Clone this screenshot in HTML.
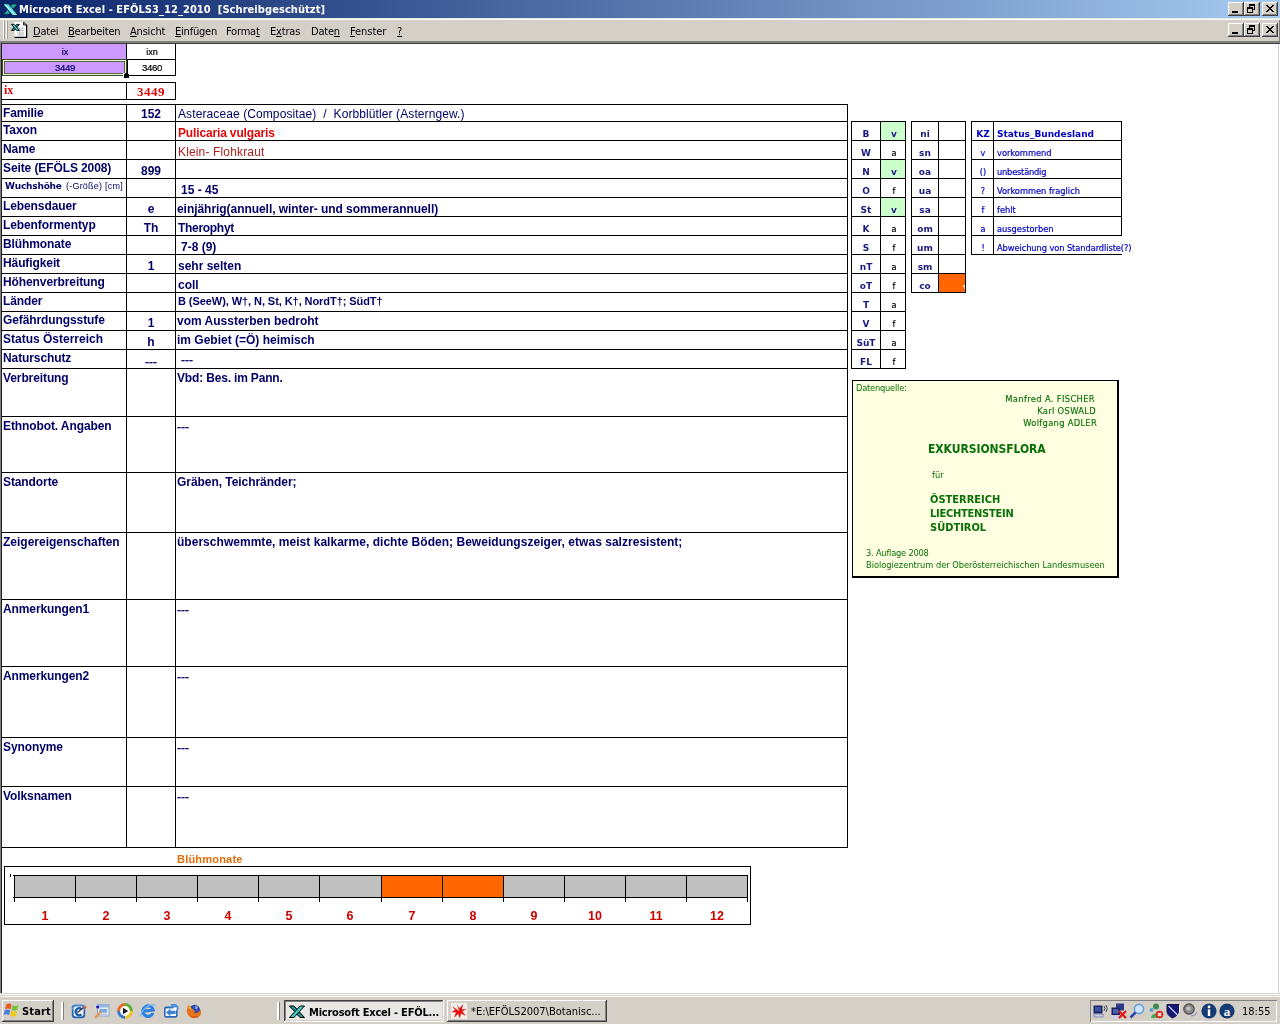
<!DOCTYPE html>
<html lang="de"><head><meta charset="utf-8"><title>Microsoft Excel - EFÖLS3_12_2010</title>
<style>
html,body{margin:0;padding:0;width:1280px;height:1024px;overflow:hidden;background:#d4d0c8}
#root{position:relative;width:1280px;height:1024px;overflow:hidden}
.a,.r,.t{position:absolute}
.r{box-sizing:border-box}
.t{white-space:nowrap;will-change:transform}
u{text-decoration:underline}
svg{position:absolute;overflow:visible}
</style></head><body><div id="root">
<div class="a" style="left:0;top:0;width:1280px;height:18px;background:linear-gradient(90deg,#0a246a 0%,#a6caf0 100%)"></div>
<div class="t" style="top:2.69px;font:bold 11px/13px 'DejaVu Sans Condensed','DejaVu Sans',sans-serif;color:#fff;left:19px;letter-spacing:0.07px;white-space:pre;">Microsoft Excel - EFÖLS3_12_2010  [Schreibgeschützt]</div>
<div class="a" style="left:0px;top:18px;width:1280px;height:23px;background:#d4d0c8"></div>
<div class="a" style="left:0px;top:18px;width:1280px;height:1px;background:#e9e7e2"></div>
<div class="a" style="left:0px;top:19px;width:1280px;height:1px;background:#fff"></div>
<div class="a" style="left:0px;top:41px;width:1280px;height:1px;background:#808080"></div>
<div class="a" style="left:0px;top:42px;width:1280px;height:1px;background:#808080"></div>
<div class="a" style="left:0px;top:43px;width:1280px;height:1px;background:#404040"></div>
<div class="a" style="left:3px;top:21px;width:1px;height:18px;background:#fff"></div>
<div class="a" style="left:4px;top:21px;width:1px;height:18px;background:#a09c94"></div>
<div class="a" style="left:6px;top:21px;width:1px;height:18px;background:#fff"></div>
<div class="a" style="left:7px;top:21px;width:1px;height:18px;background:#a09c94"></div>
<div class="t" style="left:32.5px;top:25px;font:11px/13px 'DejaVu Sans Condensed','DejaVu Sans',sans-serif;color:#000;letter-spacing:-0.2px"><u>D</u>atei</div>
<div class="t" style="left:67.5px;top:25px;font:11px/13px 'DejaVu Sans Condensed','DejaVu Sans',sans-serif;color:#000;letter-spacing:-0.2px"><u>B</u>earbeiten</div>
<div class="t" style="left:129.5px;top:25px;font:11px/13px 'DejaVu Sans Condensed','DejaVu Sans',sans-serif;color:#000;letter-spacing:-0.2px"><u>A</u>nsicht</div>
<div class="t" style="left:174.5px;top:25px;font:11px/13px 'DejaVu Sans Condensed','DejaVu Sans',sans-serif;color:#000;letter-spacing:-0.2px"><u>E</u>infügen</div>
<div class="t" style="left:226px;top:25px;font:11px/13px 'DejaVu Sans Condensed','DejaVu Sans',sans-serif;color:#000;letter-spacing:-0.2px">Forma<u>t</u></div>
<div class="t" style="left:270px;top:25px;font:11px/13px 'DejaVu Sans Condensed','DejaVu Sans',sans-serif;color:#000;letter-spacing:-0.2px">E<u>x</u>tras</div>
<div class="t" style="left:311px;top:25px;font:11px/13px 'DejaVu Sans Condensed','DejaVu Sans',sans-serif;color:#000;letter-spacing:-0.2px">Date<u>n</u></div>
<div class="t" style="left:350px;top:25px;font:11px/13px 'DejaVu Sans Condensed','DejaVu Sans',sans-serif;color:#000;letter-spacing:-0.05px"><u>F</u>enster</div>
<div class="t" style="left:397px;top:25px;font:11px/13px 'DejaVu Sans Condensed','DejaVu Sans',sans-serif;color:#000;letter-spacing:-0.2px"><u>?</u></div>
<div class="a" style="left:0px;top:44px;width:1280px;height:949px;background:#fff"></div>
<div class="a" style="left:0px;top:42px;width:1px;height:952px;background:#808080"></div>
<div class="a" style="left:1px;top:43px;width:1px;height:951px;background:#202020"></div>
<div class="a" style="left:1278px;top:44px;width:1px;height:950px;background:#d4d0c8"></div>
<div class="a" style="left:1279px;top:44px;width:1px;height:950px;background:#fff"></div>
<div class="a" style="left:0px;top:993px;width:1280px;height:1px;background:#d4d0c8"></div>
<div class="a" style="left:0px;top:994px;width:1280px;height:1px;background:#fff"></div>
<div class="a" style="left:2px;top:44px;width:124px;height:15px;background:#cc99ff"></div>
<div class="a" style="left:2px;top:60px;width:124px;height:15px;background:#cc99ff"></div>
<div class="a" style="left:2px;top:59px;width:174px;height:1px;background:#000"></div>
<div class="a" style="left:2px;top:75px;width:174px;height:1px;background:#000"></div>
<div class="a" style="left:126px;top:44px;width:1px;height:32px;background:#000"></div>
<div class="a" style="left:175px;top:44px;width:1px;height:32px;background:#000"></div>
<div class="a" style="left:2px;top:59px;width:125px;height:17px;border:1px solid #3a4a2a;box-sizing:border-box"></div>
<div class="a" style="left:3px;top:60px;width:123px;height:15px;border:1px solid #e6f5d0;box-sizing:border-box"></div>
<div class="a" style="left:4px;top:61px;width:121px;height:13px;border:1px solid #55663f;box-sizing:border-box"></div>
<div class="a" style="left:127px;top:60px;width:1px;height:13px;background:#000"></div>
<div class="a" style="left:123px;top:73px;width:6px;height:5px;background:#fff"></div>
<div class="a" style="left:124px;top:74px;width:5px;height:4px;background:#000"></div>
<div class="a" style="left:125px;top:73px;width:3px;height:1px;background:#000"></div>
<div class="t" style="top:47.38px;font:9px/11px 'Liberation Sans',sans-serif;color:#000066;left:-135.5px;width:400px;text-align:center;-webkit-text-stroke:0.2px #000066;">ix</div>
<div class="t" style="top:47.38px;font:9px/11px 'Liberation Sans',sans-serif;color:#000;left:-48.5px;width:400px;text-align:center;-webkit-text-stroke:0.2px #000;">ixn</div>
<div class="t" style="top:61.87px;font:9.6px/11.6px 'Liberation Sans',sans-serif;color:#000066;left:-135.5px;width:400px;text-align:center;letter-spacing:-0.3px;-webkit-text-stroke:0.2px #000066;">3449</div>
<div class="t" style="top:61.87px;font:9.6px/11.6px 'Liberation Sans',sans-serif;color:#000;left:-48.5px;width:400px;text-align:center;letter-spacing:-0.3px;-webkit-text-stroke:0.2px #000;">3460</div>
<div class="a" style="left:2px;top:82px;width:174px;height:1px;background:#000"></div>
<div class="a" style="left:2px;top:99px;width:174px;height:1px;background:#000"></div>
<div class="a" style="left:126px;top:82px;width:1px;height:18px;background:#000"></div>
<div class="a" style="left:175px;top:82px;width:1px;height:18px;background:#000"></div>
<div class="t" style="top:82.95px;font:bold 12px/14px 'Liberation Serif',serif;color:#dd0806;left:3.6px;">ix</div>
<div class="t" style="top:84.11px;font:bold 13px/15px 'Liberation Serif',serif;color:#dd0806;left:-49px;width:400px;text-align:center;letter-spacing:0.5px;">3449</div>
<div class="a" style="left:2px;top:104px;width:846px;height:1px;background:#000"></div>
<div class="a" style="left:2px;top:121px;width:846px;height:1px;background:#000"></div>
<div class="a" style="left:2px;top:140px;width:846px;height:1px;background:#000"></div>
<div class="a" style="left:2px;top:159px;width:846px;height:1px;background:#000"></div>
<div class="a" style="left:2px;top:178px;width:846px;height:1px;background:#000"></div>
<div class="a" style="left:2px;top:197px;width:846px;height:1px;background:#000"></div>
<div class="a" style="left:2px;top:216px;width:846px;height:1px;background:#000"></div>
<div class="a" style="left:2px;top:235px;width:846px;height:1px;background:#000"></div>
<div class="a" style="left:2px;top:254px;width:846px;height:1px;background:#000"></div>
<div class="a" style="left:2px;top:273px;width:846px;height:1px;background:#000"></div>
<div class="a" style="left:2px;top:292px;width:846px;height:1px;background:#000"></div>
<div class="a" style="left:2px;top:311px;width:846px;height:1px;background:#000"></div>
<div class="a" style="left:2px;top:330px;width:846px;height:1px;background:#000"></div>
<div class="a" style="left:2px;top:349px;width:846px;height:1px;background:#000"></div>
<div class="a" style="left:2px;top:368px;width:846px;height:1px;background:#000"></div>
<div class="a" style="left:2px;top:416px;width:846px;height:1px;background:#000"></div>
<div class="a" style="left:2px;top:472px;width:846px;height:1px;background:#000"></div>
<div class="a" style="left:2px;top:532px;width:846px;height:1px;background:#000"></div>
<div class="a" style="left:2px;top:599px;width:846px;height:1px;background:#000"></div>
<div class="a" style="left:2px;top:666px;width:846px;height:1px;background:#000"></div>
<div class="a" style="left:2px;top:737px;width:846px;height:1px;background:#000"></div>
<div class="a" style="left:2px;top:786px;width:846px;height:1px;background:#000"></div>
<div class="a" style="left:2px;top:847px;width:846px;height:1px;background:#000"></div>
<div class="a" style="left:126px;top:104px;width:1px;height:744px;background:#000"></div>
<div class="a" style="left:175px;top:104px;width:1px;height:744px;background:#000"></div>
<div class="a" style="left:847px;top:104px;width:1px;height:744px;background:#000"></div>
<div class="t" style="top:105.84px;font:bold 12px/14px 'Liberation Sans',sans-serif;color:#000066;left:3.3px;letter-spacing:-0.1px;">Familie</div>
<div class="t" style="top:122.84px;font:bold 12px/14px 'Liberation Sans',sans-serif;color:#000066;left:3.3px;letter-spacing:-0.1px;">Taxon</div>
<div class="t" style="top:141.84px;font:bold 12px/14px 'Liberation Sans',sans-serif;color:#000066;left:3.3px;letter-spacing:-0.1px;">Name</div>
<div class="t" style="top:160.84px;font:bold 12px/14px 'Liberation Sans',sans-serif;color:#000066;left:3.3px;letter-spacing:-0.1px;">Seite (EFÖLS 2008)</div>
<div class="t" style="top:198.84px;font:bold 12px/14px 'Liberation Sans',sans-serif;color:#000066;left:3.3px;letter-spacing:-0.1px;">Lebensdauer</div>
<div class="t" style="top:217.84px;font:bold 12px/14px 'Liberation Sans',sans-serif;color:#000066;left:3.3px;letter-spacing:-0.1px;">Lebenformentyp</div>
<div class="t" style="top:236.84px;font:bold 12px/14px 'Liberation Sans',sans-serif;color:#000066;left:3.3px;letter-spacing:-0.1px;">Blühmonate</div>
<div class="t" style="top:255.84px;font:bold 12px/14px 'Liberation Sans',sans-serif;color:#000066;left:3.3px;letter-spacing:-0.1px;">Häufigkeit</div>
<div class="t" style="top:274.84px;font:bold 12px/14px 'Liberation Sans',sans-serif;color:#000066;left:3.3px;letter-spacing:-0.1px;">Höhenverbreitung</div>
<div class="t" style="top:293.84px;font:bold 12px/14px 'Liberation Sans',sans-serif;color:#000066;left:3.3px;letter-spacing:-0.1px;">Länder</div>
<div class="t" style="top:312.84px;font:bold 12px/14px 'Liberation Sans',sans-serif;color:#000066;left:3.3px;letter-spacing:-0.1px;">Gefährdungsstufe</div>
<div class="t" style="top:331.84px;font:bold 12px/14px 'Liberation Sans',sans-serif;color:#000066;left:3.3px;letter-spacing:0px;">Status Österreich</div>
<div class="t" style="top:350.84px;font:bold 12px/14px 'Liberation Sans',sans-serif;color:#000066;left:3.3px;letter-spacing:-0.1px;">Naturschutz</div>
<div class="t" style="top:370.84px;font:bold 12px/14px 'Liberation Sans',sans-serif;color:#000066;left:3.3px;letter-spacing:-0.1px;">Verbreitung</div>
<div class="t" style="top:418.84px;font:bold 12px/14px 'Liberation Sans',sans-serif;color:#000066;left:3.3px;letter-spacing:-0.1px;">Ethnobot. Angaben</div>
<div class="t" style="top:474.84px;font:bold 12px/14px 'Liberation Sans',sans-serif;color:#000066;left:3.3px;letter-spacing:-0.1px;">Standorte</div>
<div class="t" style="top:534.84px;font:bold 12px/14px 'Liberation Sans',sans-serif;color:#000066;left:3.3px;letter-spacing:0px;">Zeigereigenschaften</div>
<div class="t" style="top:601.84px;font:bold 12px/14px 'Liberation Sans',sans-serif;color:#000066;left:3.3px;letter-spacing:-0.1px;">Anmerkungen1</div>
<div class="t" style="top:668.84px;font:bold 12px/14px 'Liberation Sans',sans-serif;color:#000066;left:3.3px;letter-spacing:-0.1px;">Anmerkungen2</div>
<div class="t" style="top:739.84px;font:bold 12px/14px 'Liberation Sans',sans-serif;color:#000066;left:3.3px;letter-spacing:-0.1px;">Synonyme</div>
<div class="t" style="top:788.84px;font:bold 12px/14px 'Liberation Sans',sans-serif;color:#000066;left:3.3px;letter-spacing:-0.1px;">Volksnamen</div>
<div class="t" style="top:181.39px;font:bold 9px/11px 'DejaVu Sans',sans-serif;color:#000066;left:4.5px;letter-spacing:-0.2px;">Wuchshöhe</div>
<div class="t" style="top:181.38px;font:9px/11px 'Liberation Sans',sans-serif;color:#000066;left:65.5px;letter-spacing:0.22px;">(-Größe) [cm]</div>
<div class="t" style="top:106.84px;font:bold 12px/14px 'Liberation Sans',sans-serif;color:#000066;left:-49px;width:400px;text-align:center;">152</div>
<div class="t" style="top:163.84px;font:bold 12px/14px 'Liberation Sans',sans-serif;color:#000066;left:-49px;width:400px;text-align:center;">899</div>
<div class="t" style="top:201.84px;font:bold 12px/14px 'Liberation Sans',sans-serif;color:#000066;left:-49px;width:400px;text-align:center;">e</div>
<div class="t" style="top:220.84px;font:bold 12px/14px 'Liberation Sans',sans-serif;color:#000066;left:-49px;width:400px;text-align:center;">Th</div>
<div class="t" style="top:258.84px;font:bold 12px/14px 'Liberation Sans',sans-serif;color:#000066;left:-49px;width:400px;text-align:center;">1</div>
<div class="t" style="top:315.84px;font:bold 12px/14px 'Liberation Sans',sans-serif;color:#000066;left:-49px;width:400px;text-align:center;">1</div>
<div class="t" style="top:334.84px;font:bold 12px/14px 'Liberation Sans',sans-serif;color:#000066;left:-49px;width:400px;text-align:center;">h</div>
<div class="t" style="top:354.84px;font:12px/14px 'Liberation Sans',sans-serif;color:#000066;left:-49px;width:400px;text-align:center;-webkit-text-stroke:0.3px #000066;">---</div>
<div class="t" style="top:106.84px;font:12px/14px 'Liberation Sans',sans-serif;color:#000066;left:178px;letter-spacing:0.1px;white-space:pre;">Asteraceae (Compositae)  /  Korbblütler (Asterngew.)</div>
<div class="t" style="top:125.84px;font:bold 12px/14px 'Liberation Sans',sans-serif;color:#dd0806;left:177.5px;letter-spacing:-0.15px;white-space:pre;">Pulicaria vulgaris</div>
<div class="t" style="top:144.84px;font:12px/14px 'Liberation Sans',sans-serif;color:#b02020;left:178px;letter-spacing:0.15px;white-space:pre;">Klein- Flohkraut</div>
<div class="t" style="top:182.84px;font:bold 12px/14px 'Liberation Sans',sans-serif;color:#000066;left:181px;white-space:pre;">15 - 45</div>
<div class="t" style="top:201.84px;font:bold 12px/14px 'Liberation Sans',sans-serif;color:#000066;left:177px;letter-spacing:-0.05px;white-space:pre;">einjährig(annuell, winter- und sommerannuell)</div>
<div class="t" style="top:220.84px;font:bold 12px/14px 'Liberation Sans',sans-serif;color:#000066;left:177.5px;letter-spacing:-0.3px;white-space:pre;">Therophyt</div>
<div class="t" style="top:239.84px;font:bold 12px/14px 'Liberation Sans',sans-serif;color:#000066;left:181px;white-space:pre;">7-8 (9)</div>
<div class="t" style="top:258.84px;font:bold 12px/14px 'Liberation Sans',sans-serif;color:#000066;left:177.5px;white-space:pre;">sehr selten</div>
<div class="t" style="top:277.84px;font:bold 12px/14px 'Liberation Sans',sans-serif;color:#000066;left:177.5px;white-space:pre;">coll</div>
<div class="t" style="top:294.69px;font:bold 11px/13px 'Liberation Sans',sans-serif;color:#000066;left:177.5px;letter-spacing:-0.07px;white-space:pre;">B (SeeW), W†, N, St, K†, NordT†; SüdT†</div>
<div class="t" style="top:313.84px;font:bold 12px/14px 'Liberation Sans',sans-serif;color:#000066;left:177px;white-space:pre;">vom Aussterben bedroht</div>
<div class="t" style="top:332.84px;font:bold 12px/14px 'Liberation Sans',sans-serif;color:#000066;left:177px;white-space:pre;">im Gebiet (=Ö) heimisch</div>
<div class="t" style="top:352.84px;font:12px/14px 'Liberation Sans',sans-serif;color:#000066;left:181.3px;-webkit-text-stroke:0.3px #000066;">---</div>
<div class="t" style="top:370.84px;font:bold 12px/14px 'Liberation Sans',sans-serif;color:#000066;left:177px;letter-spacing:-0.17px;">Vbd: Bes. im Pann.</div>
<div class="t" style="top:419.84px;font:12px/14px 'Liberation Sans',sans-serif;color:#000066;left:177.3px;-webkit-text-stroke:0.3px #000066;">---</div>
<div class="t" style="top:474.84px;font:bold 12px/14px 'Liberation Sans',sans-serif;color:#000066;left:177px;letter-spacing:-0.05px;">Gräben, Teichränder;</div>
<div class="t" style="top:534.84px;font:bold 12px/14px 'Liberation Sans',sans-serif;color:#000066;left:177px;letter-spacing:0.03px;">überschwemmte, meist kalkarme, dichte Böden; Beweidungszeiger, etwas salzresistent;</div>
<div class="t" style="top:602.84px;font:12px/14px 'Liberation Sans',sans-serif;color:#000066;left:177.3px;-webkit-text-stroke:0.3px #000066;">---</div>
<div class="t" style="top:669.84px;font:12px/14px 'Liberation Sans',sans-serif;color:#000066;left:177.3px;-webkit-text-stroke:0.3px #000066;">---</div>
<div class="t" style="top:740.84px;font:12px/14px 'Liberation Sans',sans-serif;color:#000066;left:177.3px;-webkit-text-stroke:0.3px #000066;">---</div>
<div class="t" style="top:789.84px;font:12px/14px 'Liberation Sans',sans-serif;color:#000066;left:177.3px;-webkit-text-stroke:0.3px #000066;">---</div>
<div class="a" style="left:881px;top:122px;width:24px;height:18px;background:#ccffcc"></div>
<div class="a" style="left:881px;top:160px;width:24px;height:18px;background:#ccffcc"></div>
<div class="a" style="left:881px;top:198px;width:24px;height:18px;background:#ccffcc"></div>
<div class="a" style="left:851px;top:121px;width:55px;height:1px;background:#000"></div>
<div class="a" style="left:851px;top:140px;width:55px;height:1px;background:#000"></div>
<div class="a" style="left:851px;top:159px;width:55px;height:1px;background:#000"></div>
<div class="a" style="left:851px;top:178px;width:55px;height:1px;background:#000"></div>
<div class="a" style="left:851px;top:197px;width:55px;height:1px;background:#000"></div>
<div class="a" style="left:851px;top:216px;width:55px;height:1px;background:#000"></div>
<div class="a" style="left:851px;top:235px;width:55px;height:1px;background:#000"></div>
<div class="a" style="left:851px;top:254px;width:55px;height:1px;background:#000"></div>
<div class="a" style="left:851px;top:273px;width:55px;height:1px;background:#000"></div>
<div class="a" style="left:851px;top:292px;width:55px;height:1px;background:#000"></div>
<div class="a" style="left:851px;top:311px;width:55px;height:1px;background:#000"></div>
<div class="a" style="left:851px;top:330px;width:55px;height:1px;background:#000"></div>
<div class="a" style="left:851px;top:349px;width:55px;height:1px;background:#000"></div>
<div class="a" style="left:851px;top:368px;width:55px;height:1px;background:#000"></div>
<div class="a" style="left:851px;top:121px;width:1px;height:248px;background:#000"></div>
<div class="a" style="left:880px;top:121px;width:1px;height:248px;background:#000"></div>
<div class="a" style="left:905px;top:121px;width:1px;height:248px;background:#000"></div>
<div class="t" style="top:129.39px;font:bold 9px/11px 'DejaVu Sans',sans-serif;color:#1a1a80;left:666px;width:400px;text-align:center;">B</div>
<div class="t" style="top:129.39px;font:bold 9px/11px 'DejaVu Sans',sans-serif;color:#1a1a80;left:693.5px;width:400px;text-align:center;">v</div>
<div class="t" style="top:148.39px;font:bold 9px/11px 'DejaVu Sans',sans-serif;color:#1a1a80;left:666px;width:400px;text-align:center;">W</div>
<div class="t" style="top:148.39px;font:9px/11px 'DejaVu Sans Condensed','DejaVu Sans',sans-serif;color:#000;left:693.5px;width:400px;text-align:center;-webkit-text-stroke:0.2px #000;">a</div>
<div class="t" style="top:167.39px;font:bold 9px/11px 'DejaVu Sans',sans-serif;color:#1a1a80;left:666px;width:400px;text-align:center;">N</div>
<div class="t" style="top:167.39px;font:bold 9px/11px 'DejaVu Sans',sans-serif;color:#1a1a80;left:693.5px;width:400px;text-align:center;">v</div>
<div class="t" style="top:186.39px;font:bold 9px/11px 'DejaVu Sans',sans-serif;color:#1a1a80;left:666px;width:400px;text-align:center;">O</div>
<div class="t" style="top:186.39px;font:9px/11px 'DejaVu Sans Condensed','DejaVu Sans',sans-serif;color:#000;left:693.5px;width:400px;text-align:center;-webkit-text-stroke:0.2px #000;">f</div>
<div class="t" style="top:205.39px;font:bold 9px/11px 'DejaVu Sans',sans-serif;color:#1a1a80;left:666px;width:400px;text-align:center;">St</div>
<div class="t" style="top:205.39px;font:bold 9px/11px 'DejaVu Sans',sans-serif;color:#1a1a80;left:693.5px;width:400px;text-align:center;">v</div>
<div class="t" style="top:224.39px;font:bold 9px/11px 'DejaVu Sans',sans-serif;color:#1a1a80;left:666px;width:400px;text-align:center;">K</div>
<div class="t" style="top:224.39px;font:9px/11px 'DejaVu Sans Condensed','DejaVu Sans',sans-serif;color:#000;left:693.5px;width:400px;text-align:center;-webkit-text-stroke:0.2px #000;">a</div>
<div class="t" style="top:243.39px;font:bold 9px/11px 'DejaVu Sans',sans-serif;color:#1a1a80;left:666px;width:400px;text-align:center;">S</div>
<div class="t" style="top:243.39px;font:9px/11px 'DejaVu Sans Condensed','DejaVu Sans',sans-serif;color:#000;left:693.5px;width:400px;text-align:center;-webkit-text-stroke:0.2px #000;">f</div>
<div class="t" style="top:262.39px;font:bold 9px/11px 'DejaVu Sans',sans-serif;color:#1a1a80;left:666px;width:400px;text-align:center;">nT</div>
<div class="t" style="top:262.39px;font:9px/11px 'DejaVu Sans Condensed','DejaVu Sans',sans-serif;color:#000;left:693.5px;width:400px;text-align:center;-webkit-text-stroke:0.2px #000;">a</div>
<div class="t" style="top:281.39px;font:bold 9px/11px 'DejaVu Sans',sans-serif;color:#1a1a80;left:666px;width:400px;text-align:center;">oT</div>
<div class="t" style="top:281.39px;font:9px/11px 'DejaVu Sans Condensed','DejaVu Sans',sans-serif;color:#000;left:693.5px;width:400px;text-align:center;-webkit-text-stroke:0.2px #000;">f</div>
<div class="t" style="top:300.39px;font:bold 9px/11px 'DejaVu Sans',sans-serif;color:#1a1a80;left:666px;width:400px;text-align:center;">T</div>
<div class="t" style="top:300.39px;font:9px/11px 'DejaVu Sans Condensed','DejaVu Sans',sans-serif;color:#000;left:693.5px;width:400px;text-align:center;-webkit-text-stroke:0.2px #000;">a</div>
<div class="t" style="top:319.39px;font:bold 9px/11px 'DejaVu Sans',sans-serif;color:#1a1a80;left:666px;width:400px;text-align:center;">V</div>
<div class="t" style="top:319.39px;font:9px/11px 'DejaVu Sans Condensed','DejaVu Sans',sans-serif;color:#000;left:693.5px;width:400px;text-align:center;-webkit-text-stroke:0.2px #000;">f</div>
<div class="t" style="top:338.39px;font:bold 9px/11px 'DejaVu Sans',sans-serif;color:#1a1a80;left:666px;width:400px;text-align:center;">SüT</div>
<div class="t" style="top:338.39px;font:9px/11px 'DejaVu Sans Condensed','DejaVu Sans',sans-serif;color:#000;left:693.5px;width:400px;text-align:center;-webkit-text-stroke:0.2px #000;">a</div>
<div class="t" style="top:357.39px;font:bold 9px/11px 'DejaVu Sans',sans-serif;color:#1a1a80;left:666px;width:400px;text-align:center;">FL</div>
<div class="t" style="top:357.39px;font:9px/11px 'DejaVu Sans Condensed','DejaVu Sans',sans-serif;color:#000;left:693.5px;width:400px;text-align:center;-webkit-text-stroke:0.2px #000;">f</div>
<div class="a" style="left:939px;top:274px;width:26px;height:18px;background:#ff6600"></div>
<div class="a" style="left:911px;top:121px;width:55px;height:1px;background:#000"></div>
<div class="a" style="left:911px;top:140px;width:55px;height:1px;background:#000"></div>
<div class="a" style="left:911px;top:159px;width:55px;height:1px;background:#000"></div>
<div class="a" style="left:911px;top:178px;width:55px;height:1px;background:#000"></div>
<div class="a" style="left:911px;top:197px;width:55px;height:1px;background:#000"></div>
<div class="a" style="left:911px;top:216px;width:55px;height:1px;background:#000"></div>
<div class="a" style="left:911px;top:235px;width:55px;height:1px;background:#000"></div>
<div class="a" style="left:911px;top:254px;width:55px;height:1px;background:#000"></div>
<div class="a" style="left:911px;top:273px;width:55px;height:1px;background:#000"></div>
<div class="a" style="left:911px;top:292px;width:55px;height:1px;background:#000"></div>
<div class="a" style="left:911px;top:121px;width:1px;height:172px;background:#000"></div>
<div class="a" style="left:938px;top:121px;width:1px;height:172px;background:#000"></div>
<div class="a" style="left:965px;top:121px;width:1px;height:172px;background:#000"></div>
<div class="t" style="top:129.39px;font:bold 9px/11px 'DejaVu Sans',sans-serif;color:#1a1a80;left:725px;width:400px;text-align:center;">ni</div>
<div class="t" style="top:148.39px;font:bold 9px/11px 'DejaVu Sans',sans-serif;color:#1a1a80;left:725px;width:400px;text-align:center;">sn</div>
<div class="t" style="top:167.39px;font:bold 9px/11px 'DejaVu Sans',sans-serif;color:#1a1a80;left:725px;width:400px;text-align:center;">oa</div>
<div class="t" style="top:186.39px;font:bold 9px/11px 'DejaVu Sans',sans-serif;color:#1a1a80;left:725px;width:400px;text-align:center;">ua</div>
<div class="t" style="top:205.39px;font:bold 9px/11px 'DejaVu Sans',sans-serif;color:#1a1a80;left:725px;width:400px;text-align:center;">sa</div>
<div class="t" style="top:224.39px;font:bold 9px/11px 'DejaVu Sans',sans-serif;color:#1a1a80;left:725px;width:400px;text-align:center;">om</div>
<div class="t" style="top:243.39px;font:bold 9px/11px 'DejaVu Sans',sans-serif;color:#1a1a80;left:725px;width:400px;text-align:center;">um</div>
<div class="t" style="top:262.39px;font:bold 9px/11px 'DejaVu Sans',sans-serif;color:#1a1a80;left:725px;width:400px;text-align:center;">sm</div>
<div class="t" style="top:281.39px;font:bold 9px/11px 'DejaVu Sans',sans-serif;color:#1a1a80;left:725px;width:400px;text-align:center;">co</div>
<div class="a" style="left:961px;top:285px;width:4px;height:4px;overflow:hidden"><div class="t" style="left:0.5px;top:-1.5px;font:bold 9px/11px 'DejaVu Sans',sans-serif;color:#fff">1</div></div>
<div class="a" style="left:971px;top:121px;width:151px;height:1px;background:#000"></div>
<div class="a" style="left:971px;top:140px;width:151px;height:1px;background:#000"></div>
<div class="a" style="left:971px;top:159px;width:151px;height:1px;background:#000"></div>
<div class="a" style="left:971px;top:178px;width:151px;height:1px;background:#000"></div>
<div class="a" style="left:971px;top:197px;width:151px;height:1px;background:#000"></div>
<div class="a" style="left:971px;top:216px;width:151px;height:1px;background:#000"></div>
<div class="a" style="left:971px;top:235px;width:151px;height:1px;background:#000"></div>
<div class="a" style="left:971px;top:254px;width:151px;height:1px;background:#000"></div>
<div class="a" style="left:971px;top:121px;width:1px;height:134px;background:#000"></div>
<div class="a" style="left:993px;top:121px;width:1px;height:134px;background:#000"></div>
<div class="a" style="left:1121px;top:121px;width:1px;height:115px;background:#000"></div>
<div class="t" style="top:129.39px;font:bold 9px/11px 'DejaVu Sans',sans-serif;color:#0000c4;left:782.5px;width:400px;text-align:center;">KZ</div>
<div class="t" style="top:129.39px;font:bold 9px/11px 'DejaVu Sans',sans-serif;color:#0000c4;left:997px;">Status_Bundesland</div>
<div class="t" style="top:148.39px;font:9px/11px 'DejaVu Sans Condensed','DejaVu Sans',sans-serif;color:#0000c4;left:783px;width:400px;text-align:center;-webkit-text-stroke:0.2px #0000c4;">v</div>
<div class="t" style="top:147.22px;font:9.2px/11.2px 'DejaVu Sans Condensed','DejaVu Sans',sans-serif;color:#0000c4;left:997px;-webkit-text-stroke:0.2px #0000c4;">vorkommend</div>
<div class="t" style="top:167.39px;font:9px/11px 'DejaVu Sans Condensed','DejaVu Sans',sans-serif;color:#0000c4;left:783px;width:400px;text-align:center;-webkit-text-stroke:0.2px #0000c4;">()</div>
<div class="t" style="top:166.22px;font:9.2px/11.2px 'DejaVu Sans Condensed','DejaVu Sans',sans-serif;color:#0000c4;left:997px;letter-spacing:-0.2px;-webkit-text-stroke:0.2px #0000c4;">unbeständig</div>
<div class="t" style="top:186.39px;font:9px/11px 'DejaVu Sans Condensed','DejaVu Sans',sans-serif;color:#0000c4;left:783px;width:400px;text-align:center;-webkit-text-stroke:0.2px #0000c4;">?</div>
<div class="t" style="top:185.22px;font:9.2px/11.2px 'DejaVu Sans Condensed','DejaVu Sans',sans-serif;color:#0000c4;left:997px;-webkit-text-stroke:0.2px #0000c4;">Vorkommen fraglich</div>
<div class="t" style="top:205.39px;font:9px/11px 'DejaVu Sans Condensed','DejaVu Sans',sans-serif;color:#0000c4;left:783px;width:400px;text-align:center;-webkit-text-stroke:0.2px #0000c4;">f</div>
<div class="t" style="top:204.22px;font:9.2px/11.2px 'DejaVu Sans Condensed','DejaVu Sans',sans-serif;color:#0000c4;left:997px;-webkit-text-stroke:0.2px #0000c4;">fehlt</div>
<div class="t" style="top:224.39px;font:9px/11px 'DejaVu Sans Condensed','DejaVu Sans',sans-serif;color:#0000c4;left:783px;width:400px;text-align:center;-webkit-text-stroke:0.2px #0000c4;">a</div>
<div class="t" style="top:223.22px;font:9.2px/11.2px 'DejaVu Sans Condensed','DejaVu Sans',sans-serif;color:#0000c4;left:997px;-webkit-text-stroke:0.2px #0000c4;">ausgestorben</div>
<div class="t" style="top:243.39px;font:9px/11px 'DejaVu Sans Condensed','DejaVu Sans',sans-serif;color:#0000c4;left:783px;width:400px;text-align:center;-webkit-text-stroke:0.2px #0000c4;">!</div>
<div class="t" style="top:242.22px;font:9.2px/11.2px 'DejaVu Sans Condensed','DejaVu Sans',sans-serif;color:#0000c4;left:997px;letter-spacing:-0.07px;-webkit-text-stroke:0.2px #0000c4;">Abweichung von Standardliste(?)</div>
<div class="a" style="left:852px;top:380px;width:267px;height:198px;background:#000"></div>
<div class="a" style="left:852px;top:380px;width:265px;height:196px;background:#ffffe1;border:1px solid #000;border-right:0;border-bottom:0;box-sizing:border-box;box-shadow:inset 1px 1px 0 #fffff8"></div>
<div class="t" style="top:382.22px;font:9.2px/11.2px 'DejaVu Sans Condensed','DejaVu Sans',sans-serif;color:#087008;left:856px;letter-spacing:-0.2px;">Datenquelle:</div>
<div class="t" style="top:393.13px;font:9.3px/11.3px 'DejaVu Sans Condensed','DejaVu Sans',sans-serif;color:#087008;left:695.3px;width:400px;text-align:right;letter-spacing:0.34px;-webkit-text-stroke:0.15px #087008;">Manfred A. FISCHER</div>
<div class="t" style="top:405.13px;font:9.3px/11.3px 'DejaVu Sans Condensed','DejaVu Sans',sans-serif;color:#087008;left:696.2px;width:400px;text-align:right;letter-spacing:0.32px;-webkit-text-stroke:0.15px #087008;">Karl OSWALD</div>
<div class="t" style="top:417.13px;font:9.3px/11.3px 'DejaVu Sans Condensed','DejaVu Sans',sans-serif;color:#087008;left:697.2px;width:400px;text-align:right;letter-spacing:0.28px;-webkit-text-stroke:0.15px #087008;">Wolfgang ADLER</div>
<div class="t" style="top:441.85px;font:bold 12px/14px 'DejaVu Sans Condensed','DejaVu Sans',sans-serif;color:#087008;left:928px;letter-spacing:-0.05px;">EXKURSIONSFLORA</div>
<div class="t" style="top:469.22px;font:9.2px/11.2px 'DejaVu Sans Condensed','DejaVu Sans',sans-serif;color:#087008;left:932px;">für</div>
<div class="t" style="top:492.69px;font:bold 11px/13px 'DejaVu Sans Condensed','DejaVu Sans',sans-serif;color:#087008;left:930px;">ÖSTERREICH</div>
<div class="t" style="top:506.69px;font:bold 11px/13px 'DejaVu Sans Condensed','DejaVu Sans',sans-serif;color:#087008;left:930px;letter-spacing:-0.25px;">LIECHTENSTEIN</div>
<div class="t" style="top:520.69px;font:bold 11px/13px 'DejaVu Sans Condensed','DejaVu Sans',sans-serif;color:#087008;left:930px;">SÜDTIROL</div>
<div class="t" style="top:547.22px;font:9.2px/11.2px 'DejaVu Sans Condensed','DejaVu Sans',sans-serif;color:#087008;left:865.5px;letter-spacing:-0.2px;">3. Auflage 2008</div>
<div class="t" style="top:559.22px;font:9.2px/11.2px 'DejaVu Sans Condensed','DejaVu Sans',sans-serif;color:#087008;left:865.5px;letter-spacing:-0.02px;">Biologiezentrum der Oberösterreichischen Landesmuseen</div>
<div class="t" style="top:852.69px;font:bold 11px/13px 'Liberation Sans',sans-serif;color:#e46c0a;left:177px;letter-spacing:0.2px;">Blühmonate</div>
<div class="r" style="left:4px;top:866px;width:747px;height:59px;border:1px solid #000;"></div>
<div class="a" style="left:14px;top:875px;width:61px;height:22px;background:#c0c0c0"></div>
<div class="a" style="left:75px;top:875px;width:61px;height:22px;background:#c0c0c0"></div>
<div class="a" style="left:136px;top:875px;width:61px;height:22px;background:#c0c0c0"></div>
<div class="a" style="left:197px;top:875px;width:61px;height:22px;background:#c0c0c0"></div>
<div class="a" style="left:258px;top:875px;width:61px;height:22px;background:#c0c0c0"></div>
<div class="a" style="left:319px;top:875px;width:62px;height:22px;background:#c0c0c0"></div>
<div class="a" style="left:381px;top:875px;width:61px;height:22px;background:#ff6600"></div>
<div class="a" style="left:442px;top:875px;width:61px;height:22px;background:#ff6600"></div>
<div class="a" style="left:503px;top:875px;width:61px;height:22px;background:#c0c0c0"></div>
<div class="a" style="left:564px;top:875px;width:61px;height:22px;background:#c0c0c0"></div>
<div class="a" style="left:625px;top:875px;width:61px;height:22px;background:#c0c0c0"></div>
<div class="a" style="left:686px;top:875px;width:61px;height:22px;background:#c0c0c0"></div>
<div class="a" style="left:13px;top:875px;width:735px;height:1px;background:#000"></div>
<div class="a" style="left:13px;top:897px;width:735px;height:1px;background:#000"></div>
<div class="a" style="left:14px;top:875px;width:1px;height:27px;background:#000"></div>
<div class="a" style="left:75px;top:875px;width:1px;height:27px;background:#000"></div>
<div class="a" style="left:136px;top:875px;width:1px;height:27px;background:#000"></div>
<div class="a" style="left:197px;top:875px;width:1px;height:27px;background:#000"></div>
<div class="a" style="left:258px;top:875px;width:1px;height:27px;background:#000"></div>
<div class="a" style="left:319px;top:875px;width:1px;height:27px;background:#000"></div>
<div class="a" style="left:381px;top:875px;width:1px;height:27px;background:#000"></div>
<div class="a" style="left:442px;top:875px;width:1px;height:27px;background:#000"></div>
<div class="a" style="left:503px;top:875px;width:1px;height:27px;background:#000"></div>
<div class="a" style="left:564px;top:875px;width:1px;height:27px;background:#000"></div>
<div class="a" style="left:625px;top:875px;width:1px;height:27px;background:#000"></div>
<div class="a" style="left:686px;top:875px;width:1px;height:27px;background:#000"></div>
<div class="a" style="left:747px;top:875px;width:1px;height:27px;background:#000"></div>
<div class="a" style="left:10px;top:874px;width:1px;height:3px;background:#000"></div>
<div class="t" style="top:909.42px;font:bold 12.5px/14.5px 'Liberation Sans',sans-serif;color:#cc0000;left:-155.5px;width:400px;text-align:center;">1</div>
<div class="t" style="top:909.42px;font:bold 12.5px/14.5px 'Liberation Sans',sans-serif;color:#cc0000;left:-94.5px;width:400px;text-align:center;">2</div>
<div class="t" style="top:909.42px;font:bold 12.5px/14.5px 'Liberation Sans',sans-serif;color:#cc0000;left:-33.5px;width:400px;text-align:center;">3</div>
<div class="t" style="top:909.42px;font:bold 12.5px/14.5px 'Liberation Sans',sans-serif;color:#cc0000;left:27.5px;width:400px;text-align:center;">4</div>
<div class="t" style="top:909.42px;font:bold 12.5px/14.5px 'Liberation Sans',sans-serif;color:#cc0000;left:88.5px;width:400px;text-align:center;">5</div>
<div class="t" style="top:909.42px;font:bold 12.5px/14.5px 'Liberation Sans',sans-serif;color:#cc0000;left:150.0px;width:400px;text-align:center;">6</div>
<div class="t" style="top:909.42px;font:bold 12.5px/14.5px 'Liberation Sans',sans-serif;color:#cc0000;left:211.5px;width:400px;text-align:center;">7</div>
<div class="t" style="top:909.42px;font:bold 12.5px/14.5px 'Liberation Sans',sans-serif;color:#cc0000;left:272.5px;width:400px;text-align:center;">8</div>
<div class="t" style="top:909.42px;font:bold 12.5px/14.5px 'Liberation Sans',sans-serif;color:#cc0000;left:333.5px;width:400px;text-align:center;">9</div>
<div class="t" style="top:909.42px;font:bold 12.5px/14.5px 'Liberation Sans',sans-serif;color:#cc0000;left:394.5px;width:400px;text-align:center;">10</div>
<div class="t" style="top:909.42px;font:bold 12.5px/14.5px 'Liberation Sans',sans-serif;color:#cc0000;left:455.5px;width:400px;text-align:center;">11</div>
<div class="t" style="top:909.42px;font:bold 12.5px/14.5px 'Liberation Sans',sans-serif;color:#cc0000;left:516.5px;width:400px;text-align:center;">12</div>
<div class="a" style="left:1228px;top:2px;width:16px;height:14px;background:#d4d0c8;box-shadow:inset -1px -1px 0 #404040,inset 1px 1px 0 #fff,inset -2px -2px 0 #808080,inset 2px 2px 0 #d4d0c8"></div>
<div class="a" style="left:1244px;top:2px;width:16px;height:14px;background:#d4d0c8;box-shadow:inset -1px -1px 0 #404040,inset 1px 1px 0 #fff,inset -2px -2px 0 #808080,inset 2px 2px 0 #d4d0c8"></div>
<div class="a" style="left:1262px;top:2px;width:16px;height:14px;background:#d4d0c8;box-shadow:inset -1px -1px 0 #404040,inset 1px 1px 0 #fff,inset -2px -2px 0 #808080,inset 2px 2px 0 #d4d0c8"></div>
<div class="a" style="left:1232px;top:11px;width:6px;height:2px;background:#000"></div>
<div class="a" style="left:1249px;top:4px;width:6px;height:2px;background:#000"></div>
<div class="a" style="left:1254px;top:4px;width:1px;height:6px;background:#000"></div>
<div class="a" style="left:1249px;top:4px;width:1px;height:3px;background:#000"></div>
<div class="a" style="left:1252px;top:9px;width:3px;height:1px;background:#000"></div>
<div class="a" style="left:1247px;top:7px;width:6px;height:6px;background:#000"></div>
<div class="a" style="left:1248px;top:9px;width:4px;height:3px;background:#d4d0c8"></div>
<div class="a" style="left:1266px;top:5px;width:2px;height:1px;background:#000"></div>
<div class="a" style="left:1272px;top:5px;width:2px;height:1px;background:#000"></div>
<div class="a" style="left:1267px;top:6px;width:2px;height:1px;background:#000"></div>
<div class="a" style="left:1271px;top:6px;width:2px;height:1px;background:#000"></div>
<div class="a" style="left:1268px;top:7px;width:2px;height:1px;background:#000"></div>
<div class="a" style="left:1270px;top:7px;width:2px;height:1px;background:#000"></div>
<div class="a" style="left:1269px;top:8px;width:2px;height:1px;background:#000"></div>
<div class="a" style="left:1269px;top:8px;width:2px;height:1px;background:#000"></div>
<div class="a" style="left:1270px;top:9px;width:2px;height:1px;background:#000"></div>
<div class="a" style="left:1268px;top:9px;width:2px;height:1px;background:#000"></div>
<div class="a" style="left:1271px;top:10px;width:2px;height:1px;background:#000"></div>
<div class="a" style="left:1267px;top:10px;width:2px;height:1px;background:#000"></div>
<div class="a" style="left:1272px;top:11px;width:2px;height:1px;background:#000"></div>
<div class="a" style="left:1266px;top:11px;width:2px;height:1px;background:#000"></div>
<div class="a" style="left:1228px;top:23px;width:16px;height:14px;background:#d4d0c8;box-shadow:inset -1px -1px 0 #404040,inset 1px 1px 0 #fff,inset -2px -2px 0 #808080,inset 2px 2px 0 #d4d0c8"></div>
<div class="a" style="left:1244px;top:23px;width:16px;height:14px;background:#d4d0c8;box-shadow:inset -1px -1px 0 #404040,inset 1px 1px 0 #fff,inset -2px -2px 0 #808080,inset 2px 2px 0 #d4d0c8"></div>
<div class="a" style="left:1262px;top:23px;width:16px;height:14px;background:#d4d0c8;box-shadow:inset -1px -1px 0 #404040,inset 1px 1px 0 #fff,inset -2px -2px 0 #808080,inset 2px 2px 0 #d4d0c8"></div>
<div class="a" style="left:1232px;top:32px;width:6px;height:2px;background:#000"></div>
<div class="a" style="left:1249px;top:25px;width:6px;height:2px;background:#000"></div>
<div class="a" style="left:1254px;top:25px;width:1px;height:6px;background:#000"></div>
<div class="a" style="left:1249px;top:25px;width:1px;height:3px;background:#000"></div>
<div class="a" style="left:1252px;top:30px;width:3px;height:1px;background:#000"></div>
<div class="a" style="left:1247px;top:28px;width:6px;height:6px;background:#000"></div>
<div class="a" style="left:1248px;top:30px;width:4px;height:3px;background:#d4d0c8"></div>
<div class="a" style="left:1266px;top:26px;width:2px;height:1px;background:#000"></div>
<div class="a" style="left:1272px;top:26px;width:2px;height:1px;background:#000"></div>
<div class="a" style="left:1267px;top:27px;width:2px;height:1px;background:#000"></div>
<div class="a" style="left:1271px;top:27px;width:2px;height:1px;background:#000"></div>
<div class="a" style="left:1268px;top:28px;width:2px;height:1px;background:#000"></div>
<div class="a" style="left:1270px;top:28px;width:2px;height:1px;background:#000"></div>
<div class="a" style="left:1269px;top:29px;width:2px;height:1px;background:#000"></div>
<div class="a" style="left:1269px;top:29px;width:2px;height:1px;background:#000"></div>
<div class="a" style="left:1270px;top:30px;width:2px;height:1px;background:#000"></div>
<div class="a" style="left:1268px;top:30px;width:2px;height:1px;background:#000"></div>
<div class="a" style="left:1271px;top:31px;width:2px;height:1px;background:#000"></div>
<div class="a" style="left:1267px;top:31px;width:2px;height:1px;background:#000"></div>
<div class="a" style="left:1272px;top:32px;width:2px;height:1px;background:#000"></div>
<div class="a" style="left:1266px;top:32px;width:2px;height:1px;background:#000"></div>
<div class="a" style="left:1279px;top:20px;width:1px;height:23px;background:#808080"></div>
<svg style="left:1.5px;top:2.8px" width="17" height="13.6" viewBox="0 0 16 13" preserveAspectRatio="none">
<path d="M9.6 0.8 L15 0.8 L6.2 11.2 L0.8 11.2 Z" fill="#25a5a2" stroke="#081445" stroke-width="0.9"/>
<path d="M0.8 0.8 L6.2 0.8 L15.4 12 L10 12 Z" fill="#4fe6e0" stroke="#081445" stroke-width="0.9"/>
<path d="M2.6 1.6 L12 11.4" stroke="#d0fffb" stroke-width="1"/>
</svg>
<svg style="left:10px;top:21px" width="18" height="18" viewBox="0 0 18 18">
<path d="M4.5 1 L13.5 1 L16.5 4 L16.5 16.5 L4.5 16.5 Z" fill="#fff"/>
<path d="M4.5 16.4 L16.6 16.4 L16.6 4" fill="none" stroke="#000" stroke-width="1.3"/>
<path d="M13.6 1 L13.6 4 L16.6 4 Z" fill="#d4d0c8" stroke="#000" stroke-width="0.9"/>
<path d="M7 7 H14 M7 9.5 H14 M7 12 H14 M7 14 H14 M9.5 7 V14 M12 7 V14" stroke="#c0c0c0" stroke-width="1"/>
<path d="M6.6 3.4 L9.4 3.4 L4.2 9.4 L1.4 9.4 Z" fill="#1f9a9a" stroke="#000" stroke-width="0.9"/>
<path d="M1.4 3.4 L4.2 3.4 L9.4 9.4 L6.6 9.4 Z" fill="#45e0dc" stroke="#000" stroke-width="0.9"/>
</svg>
<div class="a" style="left:0px;top:995px;width:1280px;height:29px;background:#d4d0c8"></div>
<div class="a" style="left:0px;top:996px;width:1280px;height:1px;background:#fff"></div>
<div class="a" style="left:2px;top:1000px;width:52px;height:22px;background:#d4d0c8;box-shadow:inset -1px -1px 0 #404040,inset 1px 1px 0 #fff,inset -2px -2px 0 #808080,inset 2px 2px 0 #d4d0c8"></div>
<svg style="left:3px;top:1002px" width="17" height="16" viewBox="0 0 17 16">
<path d="M3.2 2.4 C5 1 7 1.2 8.6 2.6 L7.4 7.4 C5.8 6.2 3.8 6 2 7.2 Z" fill="#ea5a22"/>
<path d="M9.6 3.2 C11.4 4.4 13.6 4.2 15.6 2.8 L14.4 7.8 C12.4 9 10.2 9 8.4 7.8 Z" fill="#74c23a"/>
<path d="M1.8 8.2 C3.6 7 5.6 7.2 7.2 8.4 L6 13.2 C4.4 12 2.4 11.8 0.6 13 Z" fill="#4a7ee0"/>
<path d="M8.2 8.8 C10 10 12.2 10 14.2 8.8 L13 13.8 C11 15 8.8 15 7 13.8 Z" fill="#f4c81a"/>
</svg>
<div class="t" style="left:22px;top:1005px;font:bold 11px/13px 'DejaVu Sans Condensed','DejaVu Sans',sans-serif;color:#000;letter-spacing:0.15px">Start</div>
<div class="a" style="left:61px;top:1002px;width:1px;height:18px;background:#fff"></div>
<div class="a" style="left:62px;top:1002px;width:1px;height:18px;background:#fff"></div>
<div class="a" style="left:63px;top:1002px;width:1px;height:18px;background:#808080"></div>
<div class="a" style="left:277px;top:1002px;width:1px;height:18px;background:#fff"></div>
<div class="a" style="left:278px;top:1002px;width:1px;height:18px;background:#fff"></div>
<div class="a" style="left:279px;top:1002px;width:1px;height:18px;background:#808080"></div>
<svg style="left:71px;top:1003px" width="16" height="16" viewBox="0 0 16 16"><rect x="0.8" y="1.8" width="13.4" height="13.4" rx="3" fill="#2a66b8"/><rect x="0.8" y="1.8" width="13.4" height="6" rx="3" fill="#4a8ad8"/><rect x="2.6" y="3.4" width="9.8" height="10.2" rx="2.4" fill="#eef4fc"/><path d="M10.4 6 A3.4 3.6 0 1 0 10.4 11.4" fill="none" stroke="#1c56a8" stroke-width="2.2"/><path d="M6.4 9.4 L12.6 4.6" stroke="#303030" stroke-width="1.3"/><circle cx="14" cy="4.4" r="1.3" fill="#d8602a"/></svg>
<svg style="left:94px;top:1003px" width="16" height="16" viewBox="0 0 16 16"><rect x="3.5" y="1.5" width="11.5" height="11.5" fill="#e4ecf8" stroke="#8ea4cc" stroke-width="1"/><rect x="3.5" y="1.5" width="11.5" height="3" fill="#9ab8e4"/><rect x="5.5" y="6" width="7.5" height="3.6" fill="#78a8e0"/><rect x="5.5" y="10.6" width="7.5" height="1" fill="#a8b8d0"/><rect x="2" y="2.4" width="3.4" height="3.4" fill="#1414c8" stroke="#e8e8ff" stroke-width=".5"/><path d="M1 15 L6.8 8.4" stroke="#e8944a" stroke-width="2.2"/></svg>
<svg style="left:117px;top:1003px" width="16" height="16" viewBox="0 0 16 16"><circle cx="8" cy="8" r="6.2" fill="#fff"/><path d="M1.6 8 A6.4 6.4 0 0 1 8 1.6" fill="none" stroke="#e86a24" stroke-width="3"/><path d="M8 1.6 A6.4 6.4 0 0 1 14.4 8" fill="none" stroke="#5cb038" stroke-width="3"/><path d="M14.4 8 A6.4 6.4 0 0 1 8 14.4" fill="none" stroke="#f0c020" stroke-width="3"/><path d="M8 14.4 A6.4 6.4 0 0 1 1.6 8" fill="none" stroke="#3c78d0" stroke-width="3"/><path d="M6 4.8 L11.2 8 L6 11.2 Z" fill="#181818"/></svg>
<svg style="left:140px;top:1003px" width="16" height="16" viewBox="0 0 16 16"><path d="M13 10 A5.2 5.2 0 1 1 13.2 7 L3.2 8.2" fill="none" stroke="#2a80e4" stroke-width="3.1"/><path d="M0.6 13.4 C2 5 10 0.4 15.6 2.4" fill="none" stroke="#70b4f4" stroke-width="1.3"/></svg>
<svg style="left:163px;top:1003px" width="16" height="16" viewBox="0 0 16 16"><rect x="1" y="3.4" width="13.6" height="11.4" rx="2" fill="#2a68bc"/><rect x="2.6" y="5.4" width="10.4" height="7.6" fill="#f4f8fd"/><path d="M3 9.4 L7.4 5.6 L7.4 7.8 L12.6 7.8 L12.6 11 L7.4 11 L7.4 13.2 Z" fill="#3a84d8"/><path d="M8 1 L13 1 L15.4 3.6 L15.4 7 L11 7 L11 4.4 L8 4.4 Z" fill="#4a90e0"/><rect x="10.6" y="4.4" width="3" height="3" fill="#fff"/></svg>
<svg style="left:186px;top:1003px" width="16" height="16" viewBox="0 0 16 16"><circle cx="8.6" cy="7.4" r="5.6" fill="#2c4cb0"/><path d="M9 3.4 C10.4 3 11.8 3.6 12 4.8 C11 5 10.4 5.8 10.8 6.8 C9.6 6.6 9 5.4 9 3.4 Z" fill="#88b0e8"/><path d="M2.6 1.8 C3 3 3.8 3.6 5 3.6 C4.6 5 5.4 6.2 7 6.6 C8.8 7 9.2 8.6 8 9.8 C10.4 10.4 13 9.4 14.6 6.4 C15.8 9 15 12.4 12.4 14.2 C9.6 16 5.6 15.6 3.2 13.2 C0.6 10.6 0.2 6.8 1.6 4 C1.8 3 2.2 2.4 2.6 1.8 Z" fill="#e8721a"/><path d="M2.6 1.8 C3 3 3.8 3.6 5 3.6 C4.6 5 5.4 6.2 7 6.6 C5 7 3.4 6 2.4 4.4 Z" fill="#f8a830"/><path d="M3.4 12 C5.6 14.6 10 15 12.6 13 C10 13.6 6 13.8 3.4 12 Z" fill="#c04c10"/></svg>
<div class="a" style="left:284px;top:1000px;width:160px;height:22px;background:#eae8e4;box-shadow:inset -1px -1px 0 #fff,inset 1px 1px 0 #404040,inset -2px -2px 0 #d4d0c8,inset 2px 2px 0 #808080"></div>
<svg style="left:289px;top:1005px" width="16" height="14" viewBox="0 0 16 14">
<path d="M0.5 1 L5 1 L15.5 12.5 L11 12.5 Z" fill="#209090" stroke="#000" stroke-width="1"/>
<path d="M11 1 L15.5 1 L5 12.5 L0.5 12.5 Z" fill="#40c8c0" stroke="#000" stroke-width="1"/>
</svg>
<div class="t" style="left:309px;top:1006px;font:bold 11px/13px 'DejaVu Sans Condensed','DejaVu Sans',sans-serif;color:#000;letter-spacing:-0.22px">Microsoft Excel - EFÖL...</div>
<div class="a" style="left:447px;top:1000px;width:160px;height:22px;background:#d4d0c8;box-shadow:inset -1px -1px 0 #404040,inset 1px 1px 0 #fff,inset -2px -2px 0 #808080,inset 2px 2px 0 #d4d0c8"></div>
<svg style="left:451px;top:1003px" width="16" height="16" viewBox="0 0 16 16">
<rect width="16" height="16" fill="#f0eeea"/>
<path d="M8 8 L1 3 L4 7 L0.5 9 L5 9.5 L3 15 L7 11 L9 15.5 L10 10.5 L15 13 L11.5 8.5 L15.5 6 L11 6.5 L12 1 L8.5 5.5 L6 1.5 Z" fill="#e81010"/>
</svg>
<div class="t" style="left:471px;top:1005px;font:11px/13px 'DejaVu Sans Condensed','DejaVu Sans',sans-serif;color:#000;letter-spacing:0px">*E:\EFÖLS2007\Botanisc...</div>
<div class="a" style="left:1090px;top:1000px;width:187px;height:22px;box-shadow:inset 1px 1px 0 #808080,inset -1px -1px 0 #fff"></div>
<svg style="left:1093px;top:1003px" width="16" height="16" viewBox="0 0 16 16"><rect x="0.5" y="2.5" width="9" height="8" fill="#1a2464"/><rect x="2" y="4" width="6" height="4.5" fill="#3c50a0"/><rect x="1" y="11" width="9" height="3" fill="#c8d0e8" stroke="#506090" stroke-width=".6"/><path d="M11 3 A4 4 0 0 1 11 8 M13 2 A6 6 0 0 1 13 9" fill="none" stroke="#404858" stroke-width="1"/></svg>
<svg style="left:1111px;top:1003px" width="16" height="16" viewBox="0 0 16 16"><rect x="5" y="0.5" width="8" height="7" fill="#2c3c88"/><rect x="0.5" y="4.5" width="8.5" height="7.5" fill="#1a2464"/><rect x="2" y="6" width="5.5" height="4.5" fill="#4860b0"/><rect x="1" y="13" width="8" height="2" fill="#c8d0e8"/><path d="M8 8 L15 15 M15 8 L8 15" stroke="#e01818" stroke-width="2.2"/></svg>
<svg style="left:1129px;top:1003px" width="16" height="16" viewBox="0 0 16 16"><circle cx="10" cy="6" r="4.6" fill="#cfe6fa" stroke="#6aa0d8" stroke-width="1.6"/><path d="M6.5 9.5 L1.5 14.5" stroke="#2a48b0" stroke-width="2.6"/></svg>
<svg style="left:1148px;top:1003px" width="16" height="16" viewBox="0 0 16 16"><circle cx="8" cy="3.5" r="3" fill="#3a8a4a"/><path d="M3 15 C3 9 13 9 13 15 Z" fill="#48a858"/><circle cx="3.5" cy="7" r="2" fill="#58a0c8"/><circle cx="11.5" cy="11.5" r="3.8" fill="#e02818"/><path d="M10 10 L13 13 M13 10 L10 13" stroke="#fff" stroke-width="1.3"/></svg>
<svg style="left:1166px;top:1003px" width="16" height="16" viewBox="0 0 16 16"><path d="M1 1.5 L13 1.5 L13 8 C13 12 9 14.5 7 15 C5 14.5 1 12 1 8 Z" fill="#181878" stroke="#101040" stroke-width="1"/><path d="M2.5 3 L11.5 12" stroke="#c8d0f0" stroke-width="1.2"/><path d="M13.5 2 L13.5 8 C13.5 12 10 14.5 7.5 15.5" fill="none" stroke="#f4f4f4" stroke-width="1"/></svg>
<svg style="left:1183px;top:1003px" width="16" height="16" viewBox="0 0 16 16"><circle cx="6" cy="6" r="5.2" fill="#8a8a8a" stroke="#4a4a4a" stroke-width="1.2"/><circle cx="5.6" cy="5.6" r="2.2" fill="#c0c0c0"/><path d="M8 13 A7 7 0 0 0 14 9" fill="none" stroke="#8898c8" stroke-width="1.2"/></svg>
<svg style="left:1201px;top:1003px" width="16" height="16" viewBox="0 0 16 16"><circle cx="8" cy="8" r="7.6" fill="#173c74"/><circle cx="8" cy="4" r="1.4" fill="#fff"/><rect x="6.8" y="6.4" width="2.4" height="6.6" fill="#fff"/></svg>
<svg style="left:1219px;top:1003px" width="16" height="16" viewBox="0 0 16 16"><circle cx="8" cy="8" r="7.6" fill="#173c74"/><text x="8" y="12.5" font-family="Liberation Serif,serif" font-weight="bold" font-size="13" fill="#fff" text-anchor="middle">a</text></svg>
<div class="t" style="left:1242px;top:1005px;font:11px/13px 'DejaVu Sans Condensed','DejaVu Sans',sans-serif;color:#000">18:55</div>
</div></body></html>
